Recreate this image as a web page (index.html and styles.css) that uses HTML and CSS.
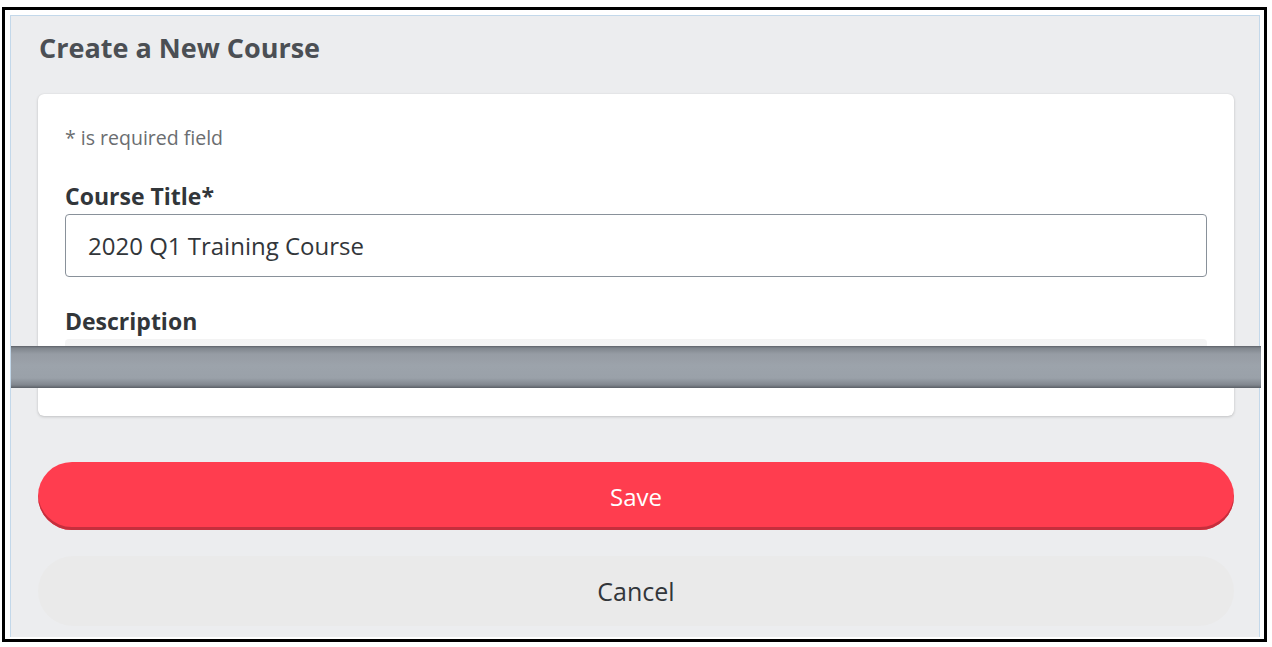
FILE: index.html
```html
<!DOCTYPE html>
<html lang="en">
<head>
    <meta charset="UTF-8">
    <meta name="viewport" content="width=device-width, initial-scale=1.0">
    <title>Create a New Course</title>
    <link rel="stylesheet" href="styles.css">
</head>
<body>
    <div class="frame">
        <div class="panel">
            <h2 class="title">Create a New Course</h2>

            <div class="card">
                <p class="hint">* is required field</p>

                <label class="label" for="courseTitle">Course Title*</label>
                <div class="input" id="courseTitle">2020 Q1 Training Course</div>

                <label class="label label-desc" for="description">Description</label>
                <div class="textarea" id="description"></div>
            </div>

            <button class="btn btn-save">Save</button>
            <button class="btn btn-cancel">Cancel</button>

            <!-- cut marker lying over the form -->
            <div class="cut"></div>
        </div>
    </div>
</body>
</html>
```

FILE: styles.css
```css
body {
    margin: 0;
    background: #ffffff;
    font-family: "Open Sans", Arial, sans-serif;
}
.frame {
    box-sizing: border-box;
    width: 1265px;
    height: 635px;
    margin: 7px 0 0 2px;
    border: 3px solid #000000;
    padding: 5px 4px 2px 5px;
    background: #ffffff;
}
.panel {
    position: relative;
    box-sizing: border-box;
    height: 100%;
    background: #ecedef;
    border: 1px solid #c3d8ea;
    border-bottom: none;
    padding: 0 25px 0 27px;
}
.title {
    margin: 0;
    padding: 16px 0 0 1px;
    height: 78px;
    box-sizing: border-box;
    font-size: 27px;
    font-weight: 700;
    line-height: 32px;
    color: #4b4f54;
}
.card {
    background: #ffffff;
    border-radius: 6px;
    box-shadow: 0 1px 3px rgba(0, 0, 0, 0.18), 0 0 1px rgba(0, 0, 0, 0.1);
    padding: 31px 27px 0 27px;
    height: 322px;
    box-sizing: border-box;
}
.hint {
    margin: 0;
    font-size: 19.5px;
    line-height: 26px;
    color: #6a6d70;
}
.label {
    display: block;
    margin: 30px 0 0 0;
    font-size: 23px;
    font-weight: 700;
    line-height: 30px;
    color: #32363a;
}
.label-desc {
    margin-top: 29px;
}
.input {
    box-sizing: border-box;
    margin-top: 3px;
    height: 63px;
    border: 1px solid #89919a;
    border-radius: 4px;
    padding: 0 22px;
    font-size: 24px;
    line-height: 61px;
    color: #32363a;
}
.textarea {
    margin-top: 3px;
    height: 40px;
    border-radius: 4px;
    background: linear-gradient(#f3f3f3, #fafafa);
}
.btn {
    display: block;
    width: 100%;
    height: 68px;
    border: none;
    border-radius: 35px;
    font-family: "Open Sans", Arial, sans-serif;
    font-size: 24px;
    cursor: pointer;
}
.btn-save {
    margin-top: 46px;
    background: #ff3d4f;
    color: #ffffff;
    box-shadow: inset 0 -3px 0 #c52f3d;
}
.btn-cancel {
    margin-top: 26px;
    height: 70px;
    background: #eaeaea;
    color: #32363a;
    font-size: 25px;
}
.cut {
    position: absolute;
    left: 0;
    right: -2px;
    top: 330px;
    height: 42px;
    background: linear-gradient(#5d6168 0, #7f858c 2px, #969ca4 8px, #9ca3ab 20px, #9aa1a9 32px, #80868e 39px, #5a5f66 42px);
}
```
